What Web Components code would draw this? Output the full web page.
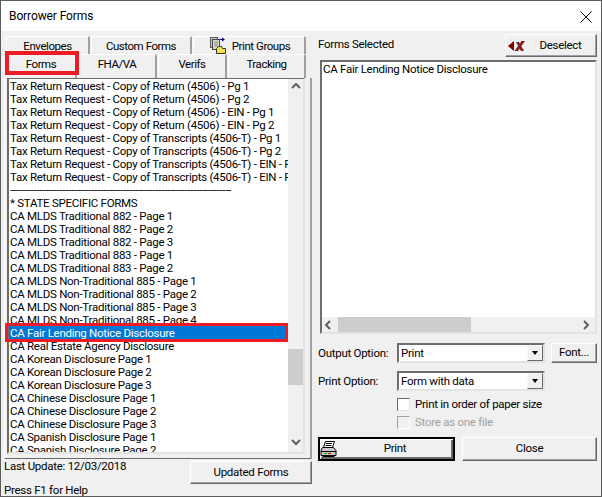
<!DOCTYPE html>
<html>
<head>
<meta charset="utf-8">
<title>Borrower Forms</title>
<style>
html,body{margin:0;padding:0;background:#f0f0f0}
body{width:602px;height:497px;overflow:hidden;font:11.5px Roboto,"Liberation Sans",Arial,sans-serif;color:#000}
</style>
</head>
<body>
<borrower-forms>
  <forms-item>Tax Return Request - Copy of Return (4506) - Pg 1</forms-item>
  <forms-item>Tax Return Request - Copy of Return (4506) - Pg 2</forms-item>
  <forms-item>Tax Return Request - Copy of Return (4506) - EIN - Pg 1</forms-item>
  <forms-item>Tax Return Request - Copy of Return (4506) - EIN - Pg 2</forms-item>
  <forms-item>Tax Return Request - Copy of Transcripts (4506-T) - Pg 1</forms-item>
  <forms-item>Tax Return Request - Copy of Transcripts (4506-T) - Pg 2</forms-item>
  <forms-item>Tax Return Request - Copy of Transcripts (4506-T) - EIN - Pg 1</forms-item>
  <forms-item>Tax Return Request - Copy of Transcripts (4506-T) - EIN - Pg 2</forms-item>
  <forms-item>----------------------------------------------------------------------------</forms-item>
  <forms-item>* STATE SPECIFIC FORMS</forms-item>
  <forms-item>CA MLDS Traditional 882 - Page 1</forms-item>
  <forms-item>CA MLDS Traditional 882 - Page 2</forms-item>
  <forms-item>CA MLDS Traditional 882 - Page 3</forms-item>
  <forms-item>CA MLDS Traditional 883 - Page 1</forms-item>
  <forms-item>CA MLDS Traditional 883 - Page 2</forms-item>
  <forms-item>CA MLDS Non-Traditional 885 - Page 1</forms-item>
  <forms-item>CA MLDS Non-Traditional 885 - Page 2</forms-item>
  <forms-item>CA MLDS Non-Traditional 885 - Page 3</forms-item>
  <forms-item>CA MLDS Non-Traditional 885 - Page 4</forms-item>
  <forms-item selected>CA Fair Lending Notice Disclosure</forms-item>
  <forms-item>CA Real Estate Agency Disclosure</forms-item>
  <forms-item>CA Korean Disclosure Page 1</forms-item>
  <forms-item>CA Korean Disclosure Page 2</forms-item>
  <forms-item>CA Korean Disclosure Page 3</forms-item>
  <forms-item>CA Chinese Disclosure Page 1</forms-item>
  <forms-item>CA Chinese Disclosure Page 2</forms-item>
  <forms-item>CA Chinese Disclosure Page 3</forms-item>
  <forms-item>CA Spanish Disclosure Page 1</forms-item>
  <forms-item>CA Spanish Disclosure Page 2</forms-item>
</borrower-forms>
<script>
const FONT = `font:11.5px Roboto,"Liberation Sans",Arial,sans-serif;letter-spacing:-0.27px;`;

const ICONS = {
  groups: `<svg width="16" height="17" viewBox="0 0 16 17"><rect x=".5" y=".5" width="7" height="10" fill="#c8c8c8" stroke="#555"/><rect x="2.500" y="2.500" width="7" height="10" fill="#d8d8d8" stroke="#444"/><path d="M4 5h4M4 7h4M4 9h4" stroke="#888"/><path d="M10 2.500h3" stroke="#00008b"/><path d="M12 .5v4l3-2z" fill="#00008b"/><path d="M6.500 16.500v-5l2-2h3l1 2h3v5z" fill="#f2e14a" stroke="#333"/></svg>`,
  deselect: `<svg width="17" height="12" viewBox="0 0 17 12"><path d="M0 6 6 1v10z" fill="#800000"/><path d="M7 11 14 1h3L10 11zM8 2h3l5 9h-3z" fill="#8b1a1a"/><path d="M7 11 14 1" stroke="#444" stroke-width="1"/></svg>`,
  printer: `<svg width="17" height="17" viewBox="0 0 17 17"><path d="M5.500 .5h9l-2 6h-9z" fill="#fff" stroke="#000"/><path d="M6 2.500h6M5.500 4.500h6" stroke="#000"/><path d="M2.500 6.500h11l2.500 3v5h-15v-5z" fill="#c8c8c8" stroke="#000"/><path d="M1 10.500h15" stroke="#000"/><path d="M4 12.500h3" stroke="#0a0"/><path d="M8 12.500h3" stroke="#d00"/><path d="M2.500 15.500h12" stroke="#000"/></svg>`,
  close: `<svg width="12" height="12" viewBox="0 0 12 12"><path d="M.5.5l11 11M11.500.5l-11 11" stroke="#000" fill="none"/></svg>`
};

const define = (name, html, cls = HTMLElement) => {
  customElements.define(name, class extends cls {
    connectedCallback() {
      if (this.shadowRoot) return;
      this.attachShadow({ mode: 'open' });
      this.shadowRoot.innerHTML = typeof html === 'function' ? html(this) : html;
    }
  });
};

define('win-titlebar', el => `
  <style>
    :host{display:flex;align-items:center;justify-content:space-between;height:30px;background:#fff;padding:0 9px 0 8px;font:12px Roboto,"Liberation Sans",Arial,sans-serif;letter-spacing:-0.1px;color:#000}
    svg{display:block;margin-top:1px}
  </style>
  <slot></slot>${ICONS.close}`);

define('win-tab', el => `
  <style>
    :host{display:flex;align-items:center;justify-content:center;gap:6px;box-sizing:border-box;height:100%;background:#f0f0f0;
      border-top:1px solid #fff;border-left:1px solid #fff;border-right:2px solid #a0a0a0;${FONT}letter-spacing:-0.45px;
      flex:0 0 ${el.getAttribute('w')}px;border-radius:2px 2px 0 0;padding-left:${el.getAttribute('pl') || 0}px;padding-bottom:${el.getAttribute('pb') || 0}px}
    svg{display:block}
  </style>
  ${el.hasAttribute('icon') ? ICONS[el.getAttribute('icon')] : ''}<slot></slot>`);

define('win-tabrow', `
  <style>:host{display:flex;align-items:stretch;gap:1px}</style><slot></slot>`);

define('forms-item', el => `
  <style>
    :host{display:block;height:13px;line-height:13px;padding-left:1px;white-space:nowrap;overflow:hidden;${FONT}}
    :host([selected]){background:#0078d7;color:#fff}
  </style><slot></slot>`);

define('win-scroll', el => {
  const h = el.hasAttribute('horizontal');
  const size = el.getAttribute('thumb').split(',');
  const a = h ? 'M5 1 1 5l4 4' : 'M1 5l4-4 4 4';
  const b = h ? 'M1 1l4 4-4 4' : 'M1 1l4 4 4-4';
  const btn = d => `<svg width="10" height="10" viewBox="0 0 10 10"><path d="${d}" fill="none" stroke="#606060" stroke-width="2"/></svg>`;
  return `<style>
    :host{display:flex;flex-direction:${h ? 'row' : 'column'};background:#f0f0f0;flex:none;${h ? 'height:15px' : 'width:15px'}}
    .b{flex:0 0 ${h ? 15 : 17}px;display:flex;align-items:center;justify-content:center}
    .t{flex:1;position:relative}
    .t i{position:absolute;background:#cdcdcd;${h ? `top:0;bottom:0;left:${size[0]}px;width:${size[1]}px` : `left:0;right:0;top:${size[0]}px;height:${size[1]}px`}}
  </style>
  <div class="b">${btn(a)}</div><div class="t"><i></i></div><div class="b">${btn(b)}</div>`;
});

define('win-sunken', `
  <style>
    :host{display:flex;box-sizing:border-box;background:#fff;border:2px solid;border-color:#6d6d6d #e3e3e3 #e3e3e3 #6d6d6d;overflow:hidden}
  </style><slot></slot>`);

define('win-button', el => `
  <style>
    :host{display:flex;align-items:center;box-sizing:border-box;background:#f0f0f0;position:relative;${FONT}
      border:1px solid;border-color:#fff #696969 #696969 #fff;box-shadow:inset -1px -1px 0 #a0a0a0}
    :host([default]){border:2px solid #000;border-color:#000;box-shadow:inset 1px 1px 0 #fff,inset -2px -2px 0 #696969}
    .i{flex:none;display:flex;padding-left:var(--ico,0)}
    .l{flex:1;text-align:center;padding-bottom:2px}
    svg{display:block}
  </style>
  ${el.hasAttribute('icon') ? `<span class="i">${ICONS[el.getAttribute('icon')]}</span>` : ''}<span class="l"><slot></slot></span>`);

define('win-combo', `
  <style>
    :host{display:flex;align-items:center;box-sizing:border-box;height:20px;background:#fff;${FONT}
      border:2px solid;border-color:#6d6d6d #e3e3e3 #e3e3e3 #6d6d6d;padding-left:2px}
    .v{flex:1}
    .d{width:16px;height:16px;box-sizing:border-box;background:#f0f0f0;border:1px solid;border-color:#f8f8f8 #696969 #696969 #f8f8f8;display:flex;align-items:center;justify-content:center}
    .d b{display:block;width:0;height:0;border:3.500px solid transparent;border-top:4px solid #000;border-bottom:0}
  </style>
  <span class="v"><slot></slot></span><span class="d"><b></b></span>`);

define('win-check', el => `
  <style>
    :host{display:flex;align-items:center;gap:5px;height:13px;${FONT}}
    :host([disabled]){color:#a0a0a0}
    i{display:block;box-sizing:border-box;width:13px;height:13px;background:#fff;border:1px solid;border-color:#696969 #e3e3e3 #e3e3e3 #696969}
    :host([disabled]) i{background:#f0f0f0;border-color:#a0a0a0 #fff #fff #a0a0a0}
    span{margin-bottom:2px}
  </style><i></i><span><slot></slot></span>`);

define('form-option', el => `
  <style>
    :host{display:flex;align-items:center;${FONT}}
    .c{flex:0 0 79px}
    ::slotted(win-combo){flex:0 0 148px}
  </style><span class="c">${el.getAttribute('label')}</span><slot></slot>`);

define('borrower-forms', `
  <style>
    :host{display:flex;flex-direction:column;box-sizing:border-box;width:602px;height:497px;background:#f0f0f0;
      border:1px solid #5c5c5c;${FONT}position:relative}
    .main{flex:1;display:grid;grid-template-columns:311px 1fr;min-height:0}
    .left{display:flex;flex-direction:column;min-height:0}
    .row1{height:18px;margin:5px 5px 0 5px}
    .row2{height:24px;margin:0 5px}
    .pane{box-sizing:border-box;height:381px;margin-left:3px;border:1px solid;border-color:#fff #a0a0a0 #696969 #fff;border-top:0;border-right-width:2px;padding:0 5px 4px 2px;display:flex}
    .lb{flex:1;display:flex;min-width:0;border-top-width:1px}
    .items{flex:1;min-width:0;overflow:hidden;height:100%}
    .foot{flex:1;display:flex;justify-content:space-between;padding-left:3px;min-height:0}
    .stat{display:flex;flex-direction:column;justify-content:space-between;height:38px}
    .up{width:122px;height:23px;margin-top:2px}
    .right{display:flex;flex-direction:column;padding:3px 4px 0 6px;min-height:0}
    .hd{display:flex;justify-content:space-between;align-items:center;height:23px}
    .hd>span{margin-bottom:3px}
    .deselect{width:92px;height:23px;--ico:2px}
    .sel{flex:none;height:274px;margin-top:3px;margin-left:2px;flex-direction:column;display:flex}
    .sel .txt{flex:1}
    .opts{display:flex;flex-direction:column;margin-top:9px}
    .o1{display:flex;gap:6px;align-items:center}
    .font{width:46px;height:20px}
    .o2{margin-top:8px}
    .c1{margin:7px 0 0 79px}
    .c2{margin:5px 0 0 79px}
    .btns{display:flex;justify-content:space-between;margin-top:8px}
    .print{width:137px;height:24px;--ico:0}
    .close{width:135px;height:24px}
  </style>
  <win-titlebar>Borrower Forms</win-titlebar>
  <div class="main">
    <div class="left">
      <win-tabrow class="row1">
        <win-tab w="84">Envelopes</win-tab>
        <win-tab w="101">Custom Forms</win-tab>
        <win-tab w="113" icon="groups" pl="2">Print Groups</win-tab>
      </win-tabrow>
      <win-tabrow class="row2">
        <win-tab w="71" pb="6">Forms</win-tab>
        <win-tab w="79" pb="6">FHA/VA</win-tab>
        <win-tab w="69" pb="6">Verifs</win-tab>
        <win-tab w="78" pb="6">Tracking</win-tab>
      </win-tabrow>
      <div class="pane">
        <win-sunken class="lb">
          <div class="items"><slot></slot></div>
          <win-scroll thumb="253,36"></win-scroll>
        </win-sunken>
      </div>
      <div class="foot">
        <div class="stat"><span>Last Update: 12/03/2018</span><span>Press F1 for Help</span></div>
        <win-button class="up"><span>Updated Forms</span></win-button>
      </div>
    </div>
    <div class="right">
      <div class="hd"><span>Forms Selected</span><win-button class="deselect" icon="deselect">Deselect</win-button></div>
      <win-sunken class="sel">
        <div class="txt"><forms-item>CA Fair Lending Notice Disclosure</forms-item></div>
        <win-scroll horizontal thumb="1,133"></win-scroll>
      </win-sunken>
      <div class="opts">
        <div class="o1">
          <form-option label="Output Option:"><win-combo>Print</win-combo></form-option>
          <win-button class="font"><span>Font...</span></win-button>
        </div>
        <form-option class="o2" label="Print Option:"><win-combo>Form with data</win-combo></form-option>
        <win-check class="c1">Print in order of paper size</win-check>
        <win-check class="c2" disabled>Store as one file</win-check>
      </div>
      <div class="btns">
        <win-button class="print" default icon="printer">Print</win-button>
        <win-button class="close">Close</win-button>
      </div>
    </div>
  </div>
  <red-box style="left:4px;top:50px;width:74px;height:24px;border-width:4px"></red-box>
  <red-box style="left:4px;top:322px;width:283px;height:19px"></red-box>`);

// annotation rectangles drawn over the dialog
define('red-box', `<style>:host{position:absolute;box-sizing:border-box;border:3px solid #ed1c24;pointer-events:none}</style>`);
</script>
</body>
</html>
